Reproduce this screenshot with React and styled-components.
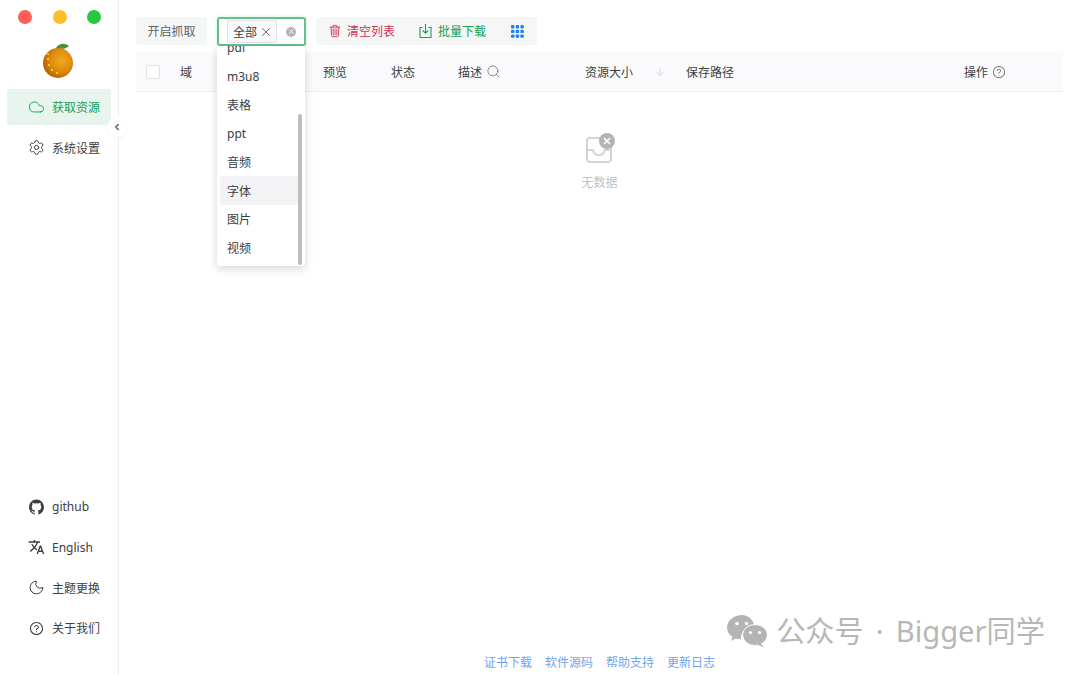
import React from "react";
import styled, { createGlobalStyle } from "styled-components";
import { ArrowDown, ChevronLeft, Cloud, Moon, Search, Settings, X } from "lucide-react";
import { IoLogoGithub, IoTrashOutline } from "react-icons/io5";
import { MdTranslate } from "react-icons/md";
import { AiOutlineQuestionCircle } from "react-icons/ai";

const GlobalStyle = createGlobalStyle`
  html, body {
    margin: 0;
    height: 100%;
    background: #fff;
    font-family: "Noto Sans", "Noto Sans CJK SC", sans-serif;
    font-size: 12px;
    color: #3b3e42;
    overflow: hidden;
  }
  #root { height: 100%; }
  * { box-sizing: border-box; }
`;

const Shell = styled.div`
  display: flex;
  height: 675px;
  width: 1080px;
  position: relative;
`;

const Sidebar = styled.aside`
  position: relative;
  width: 119px;
  flex: none;
  display: flex;
  flex-direction: column;
  justify-content: space-between;
  border-right: 1px solid #eeeef2;
  padding: 10px 7px 29px;
`;

const Lights = styled.div`
  display: flex;
  gap: 20.5px;
  padding-left: 11px;
`;

const Light = styled.span`
  width: 14px;
  height: 14px;
  border-radius: 50%;
  background: ${(p) => p.$color};
`;

const LogoWrap = styled.div`
  display: flex;
  justify-content: center;
  padding: 17px 2px 10px 0;
`;

const Nav = styled.nav`
  display: flex;
  flex-direction: column;
  gap: 4.5px;
`;

const NavItem = styled.div`
  width: 104px;
  height: 36px;
  display: flex;
  align-items: center;
  gap: 7px;
  padding-left: 21px;
  border-radius: 3px;
  white-space: nowrap;
  background: ${(p) => (p.$active ? "#e7f5ee" : "transparent")};
  color: ${(p) => (p.$active ? "#18a058" : "#3b3e42")};
`;

const IconSlot = styled.span`
  width: 17px;
  height: 17px;
  display: flex;
  align-items: center;
  justify-content: center;
  flex: none;
`;

const CollapseBtn = styled.div`
  position: absolute;
  left: 107px;
  top: 117px;
  width: 20px;
  height: 20px;
  border-radius: 50%;
  background: #fff;
  display: flex;
  align-items: center;
  justify-content: center;
  color: #555;
  box-shadow: 0 1px 3px rgba(0, 0, 0, 0.06);
`;

const Main = styled.main`
  flex: 1;
  min-width: 0;
  display: flex;
  flex-direction: column;
  padding: 17px 17px 4px;
  position: relative;
`;

const Toolbar = styled.div`
  display: flex;
  gap: 10px;
  height: 29px;
  margin-bottom: 6px;
`;

const ToolGroup = styled.div`
  display: flex;
  align-items: center;
  height: 28px;
  background: #f5f7f6;
  border-radius: 3px;
  padding: ${(p) => p.$pad || "0"};
  gap: ${(p) => p.$gap || "0"};
  color: ${(p) => p.$color || "inherit"};
`;

const ToolAction = styled.span`
  display: flex;
  align-items: center;
  gap: 5px;
  color: ${(p) => p.$color};
`;

const DotsWrap = styled.span`
  display: flex;
  margin-left: 2px;
`;

const Select = styled.div`
  position: relative;
  width: 89px;
  height: 29px;
  border: 2px solid #63c08f;
  border-radius: 3px;
  display: flex;
  align-items: center;
  padding-left: 8px;
  background: #fff;
  box-shadow: 0 0 3px rgba(24, 160, 88, 0.25);
`;

const Tag = styled.span`
  height: 23px;
  width: 50px;
  display: flex;
  align-items: center;
  justify-content: space-between;
  padding: 0 3px 0 5px;
  background: #fafafc;
  border: 1px solid #e3e3e6;
  border-radius: 2px;
`;

const ClearDot = styled.span`
  position: absolute;
  right: 8px;
  top: 7.500px;
  width: 10px;
  height: 10px;
  border-radius: 50%;
  background: #b4b4b6;
  display: flex;
  align-items: center;
  justify-content: center;
  color: #fff;
`;

const Menu = styled.div`
  position: absolute;
  z-index: 3;
  left: 98px;
  top: 46px;
  width: 88px;
  height: 220px;
  background: #fff;
  border-radius: 0 0 3px 3px;
  box-shadow: 0 3px 10px rgba(0, 0, 0, 0.16);
  overflow: hidden;
`;

const MenuList = styled.div`
  margin-top: -13px;
  padding: 0 3px;
`;

const MenuOption = styled.div`
  height: 28.7px;
  display: flex;
  align-items: center;
  padding-left: 7px;
  border-radius: 3px;
  background: ${(p) => (p.$hover ? "#f3f3f5" : "transparent")};
`;

const ScrollThumb = styled.div`
  position: absolute;
  right: 3px;
  top: 68px;
  width: 4px;
  height: 151px;
  border-radius: 2px;
  background: #bdbdbd;
`;

const TableHead = styled.div`
  display: grid;
  grid-template-columns: 44px 143px 68px 67px 127px 101px 278px 1fr;
  align-items: center;
  height: 40px;
  background: #fafafc;
  border-bottom: 1px solid #efeff5;
  flex: none;
`;

const HeadCell = styled.div`
  display: flex;
  align-items: center;
  gap: ${(p) => p.$gap || "4px"};
  white-space: nowrap;
`;

const Checkbox = styled.span`
  width: 14px;
  height: 14px;
  margin-left: 10px;
  border: 1px solid #e0e0e6;
  border-radius: 2px;
  background: #fff;
`;

const Empty = styled.div`
  display: flex;
  flex-direction: column;
  align-items: center;
  gap: 8px;
  padding: 41px 0 0 0;
  color: #c2c2c4;
  font-size: 12px;
`;

const Footer = styled.footer`
  margin-top: auto;
  display: flex;
  justify-content: center;
  gap: 13px;
  color: #70a5ee;
  line-height: 16px;
`;

const Watermark = styled.div`
  position: absolute;
  right: 35px;
  top: 612px;
  display: flex;
  align-items: center;
  gap: 8.500px;
  font-size: 29.200px;
  line-height: 38px;
  word-spacing: 4.500px;
  color: #b7b7b7;
  white-space: nowrap;
`;

function Orange() {
  return (
    <svg width="34" height="38" viewBox="0 0 34 38">
      <defs>
        <radialGradient id="peel" cx="0.62" cy="0.42" r="0.65">
          <stop offset="0" stopColor="#f2a81e" />
          <stop offset="0.55" stopColor="#e08c0c" />
          <stop offset="1" stopColor="#b55d05" />
        </radialGradient>
      </defs>
      <path d="M15 7C17 3 23 1 28 5 C25 8 20 9 15 7Z" fill="#4c8f3a" />
      <circle cx="17" cy="22" r="15" fill="url(#peel)" />
      <circle cx="7" cy="18" r="1.1" fill="#f5e020" />
      <circle cx="8" cy="24" r="1.1" fill="#f5e020" />
      <circle cx="11" cy="29" r="1.1" fill="#f5e020" />
      <circle cx="16" cy="32" r="1.1" fill="#f5e020" />
      <circle cx="7" cy="13" r="1" fill="#f5e020" />
    </svg>
  );
}

function TrayDownload() {
  return (
    <svg width="15" height="16" viewBox="0 0 15 16" fill="none" stroke="#18a058" strokeWidth="1.1">
      <path d="M4.5 4.5H2v10h11v-10h-2.5" />
      <path d="M7.5 1v9M4.8 7.5l2.7 2.8 2.7-2.8" />
    </svg>
  );
}

function DotGrid() {
  const dots = [];
  for (let y = 0; y < 3; y++) {
    for (let x = 0; x < 3; x++) {
      dots.push(<rect key={`${x}-${y}`} x={x * 4.7} y={y * 4.7} width="3.4" height="3.4" rx="0.9" />);
    }
  }
  return (
    <svg width="13" height="13" viewBox="0 0 13 13" fill="#2080f0">
      {dots}
    </svg>
  );
}

function EmptyIcon() {
  return (
    <svg width="30" height="32" viewBox="0 0 30 32" fill="none">
      <path
        d="M16 5H4.5A2.5 2.5 0 0 0 2 7.500V26a3 3 0 0 0 3 3h18a3 3 0 0 0 3-3V15"
        stroke="#d4d4d6"
        strokeWidth="2"
      />
      <path d="M2 17h6c1 4 3 5 6 5s5-1 6-5h6" stroke="#d4d4d6" strokeWidth="2" />
      <circle cx="22" cy="8" r="8" fill="#b4b4b6" />
      <path d="M19 5l6 6M25 5l-6 6" stroke="#fff" strokeWidth="1.6" />
    </svg>
  );
}

function Wechat() {
  return (
    <svg width="41" height="33" viewBox="0 0 41 33" fill="#b4b4b4">
      <path d="M15 0C7 0 0 5.500 0 12.500c0 4 2.200 7.300 5.500 9.500L4.200 26l4.600-2.500c1.800.5 3.600.8 5.200.8-.5-8 6-13 13.500-13C26.500 5 21.500 0 15 0z" />
      <ellipse cx="28" cy="20" rx="12.500" ry="10.500" stroke="#fff" strokeWidth="1" />
      <path d="M34 28l2.500 4.500-6-3z" />
      <circle cx="10" cy="8.500" r="1.800" fill="#fff" />
      <circle cx="19.500" cy="8.500" r="1.800" fill="#fff" />
      <circle cx="23.500" cy="17.500" r="1.600" fill="#fff" />
      <circle cx="32.500" cy="17.500" r="1.600" fill="#fff" />
    </svg>
  );
}

const menuOptions = ["pdf", "m3u8", "表格", "ppt", "音频", "字体", "图片", "视频"];

export default function App() {
  return (
    <>
      <GlobalStyle />
      <Shell>
        <Sidebar>
          <div>
            <Lights>
              <Light $color="#ff5f57" />
              <Light $color="#ffbd2e" />
              <Light $color="#28c840" />
            </Lights>
            <LogoWrap>
              <Orange />
            </LogoWrap>
            <Nav>
              <NavItem $active>
                <IconSlot>
                  <Cloud size={18} strokeWidth={1.3} />
                </IconSlot>
                获取资源
              </NavItem>
              <NavItem>
                <IconSlot>
                  <Settings size={17} strokeWidth={1.4} />
                </IconSlot>
                系统设置
              </NavItem>
            </Nav>
          </div>
          <Nav>
            <NavItem>
              <IconSlot>
                <IoLogoGithub size={18} />
              </IconSlot>
              github
            </NavItem>
            <NavItem>
              <IconSlot>
                <MdTranslate size={18} />
              </IconSlot>
              English
            </NavItem>
            <NavItem>
              <IconSlot>
                <Moon size={17} strokeWidth={1.4} />
              </IconSlot>
              主题更换
            </NavItem>
            <NavItem>
              <IconSlot>
                <AiOutlineQuestionCircle size={15} />
              </IconSlot>
              关于我们
            </NavItem>
          </Nav>
          <CollapseBtn>
            <ChevronLeft size={10} strokeWidth={3} />
          </CollapseBtn>
        </Sidebar>

        <Main>
          <Toolbar>
            <ToolGroup $pad="0 11.500px" $color="#5f6266">
              开启抓取
            </ToolGroup>
            <Select>
              <Tag>
                全部
                <X size={14} strokeWidth={1.4} color="#555" />
              </Tag>
              <ClearDot>
                <X size={7} strokeWidth={3} />
              </ClearDot>
            </Select>
            <ToolGroup $pad="0 13px 0 12px" $gap="23px">
              <ToolAction $color="#d03050">
                <IoTrashOutline size={14} />
                清空列表
              </ToolAction>
              <ToolAction $color="#18a058">
                <TrayDownload />
                批量下载
              </ToolAction>
              <DotsWrap>
                <DotGrid />
              </DotsWrap>
            </ToolGroup>
          </Toolbar>

          <Menu>
            <MenuList>
              {menuOptions.map((o) => (
                <MenuOption key={o} $hover={o === "字体"}>
                  {o}
                </MenuOption>
              ))}
            </MenuList>
            <ScrollThumb />
          </Menu>

          <TableHead>
            <HeadCell>
              <Checkbox />
            </HeadCell>
            <HeadCell>域</HeadCell>
            <HeadCell>预览</HeadCell>
            <HeadCell>状态</HeadCell>
            <HeadCell>
              描述
              <Search size={15} strokeWidth={1.2} color="#666" />
            </HeadCell>
            <HeadCell $gap="21px">
              资源大小
              <ArrowDown size={12} strokeWidth={1.2} color="#c2c2c4" />
            </HeadCell>
            <HeadCell>保存路径</HeadCell>
            <HeadCell>
              操作
              <AiOutlineQuestionCircle size={14} color="#808080" />
            </HeadCell>
          </TableHead>

          <Empty>
            <EmptyIcon />
            无数据
          </Empty>

          <Footer>
            <span>证书下载</span>
            <span>软件源码</span>
            <span>帮助支持</span>
            <span>更新日志</span>
          </Footer>

          <Watermark>
            <Wechat />
            公众号 · Bigger同学
          </Watermark>
        </Main>
      </Shell>
    </>
  );
}
